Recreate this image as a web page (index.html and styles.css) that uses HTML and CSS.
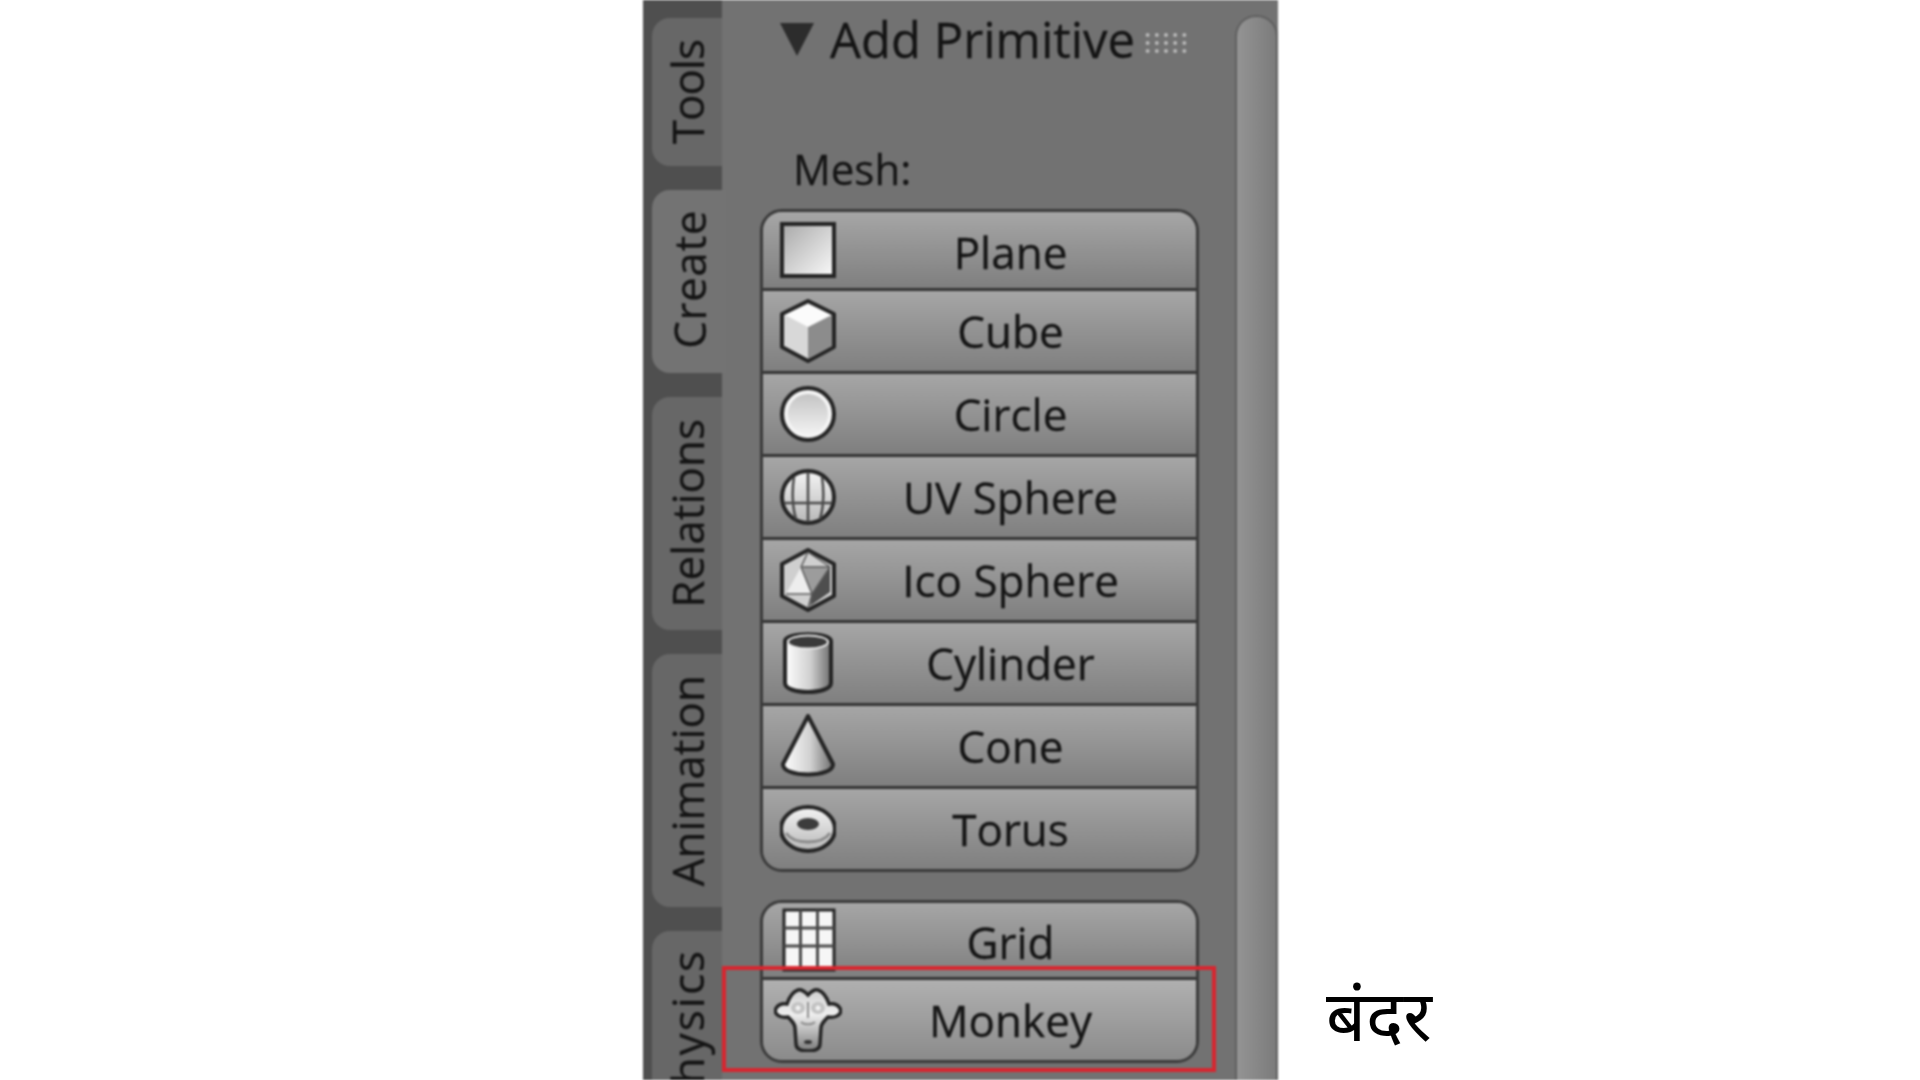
FILE: index.html
```html
<!DOCTYPE html>
<html lang="en">
<head>
  <meta charset="UTF-8">
  <meta name="viewport" content="width=device-width, initial-scale=1.0">
  <title>Add Primitive</title>
  <link rel="stylesheet" href="styles.css">
</head>
<body>
  <svg class="defs" width="0" height="0">
    <defs>
      <linearGradient id="shadeDiag" x1="0" y1="0" x2="1" y2="1">
        <stop offset="0" stop-color="#a8a8a8"/>
        <stop offset="1" stop-color="#fafafa"/>
      </linearGradient>
      <linearGradient id="shadeDown" x1="0" y1="0" x2="0" y2="1">
        <stop offset="0" stop-color="#f4f4f4"/>
        <stop offset="1" stop-color="#b8b8b8"/>
      </linearGradient>
      <linearGradient id="shadeMonkey" x1="0" y1="0" x2="0" y2="1">
        <stop offset="0" stop-color="#cfcfcf"/>
        <stop offset="0.4" stop-color="#efefef"/>
        <stop offset="1" stop-color="#7c7c7c"/>
      </linearGradient>
      <linearGradient id="shadeSide" x1="0" y1="0" x2="1" y2="0">
        <stop offset="0" stop-color="#ffffff"/>
        <stop offset="0.55" stop-color="#d0d0d0"/>
        <stop offset="1" stop-color="#6e6e6e"/>
      </linearGradient>
      <linearGradient id="shadeCircle" x1="0" y1="0" x2="0" y2="1">
        <stop offset="0" stop-color="#c4c4c4"/>
        <stop offset="1" stop-color="#f2f2f2"/>
      </linearGradient>
    </defs>
  </svg>

  <div class="panel">
    <nav class="tabs">
      <div class="tab first"><span>Tools</span></div>
      <div class="tab active"><span>Create</span></div>
      <div class="tab"><span>Relations</span></div>
      <div class="tab tight"><span>Animation</span></div>
      <div class="tab last"><span>Physics</span></div>
    </nav>

    <main class="content">
      <div class="header">
        <span class="arrow"></span>
        <h2>Add Primitive</h2>
        <span class="grip"></span>
      </div>
      <div class="label">Mesh:</div>

      <div class="group">
        <div class="row">
          <svg class="icon" viewBox="0 0 56 64"><rect x="2" y="6" width="52" height="52" fill="url(#shadeDiag)" stroke="#242424" stroke-width="4"/></svg>
          <span>Plane</span>
        </div>
        <div class="row">
          <svg class="icon" viewBox="0 0 56 64">
            <path d="M28 2 L54 15 V48 L28 62 L2 48 V15Z" fill="#d8d8d8" stroke="#242424" stroke-width="4" stroke-linejoin="round"/>
            <path d="M28 28 L52 16 V47 L28 60Z" fill="#8c8c8c"/>
            <path d="M28 5 L51 16 L28 28 L5 16Z" fill="#fbfbfb"/>
          </svg>
          <span>Cube</span>
        </div>
        <div class="row">
          <svg class="icon" viewBox="0 0 56 64">
            <circle cx="28" cy="32" r="26" fill="#f4f4f4" stroke="#242424" stroke-width="4"/>
            <circle cx="28" cy="32" r="20" fill="url(#shadeCircle)"/>
          </svg>
          <span>Circle</span>
        </div>
        <div class="row">
          <svg class="icon" viewBox="0 0 56 64">
            <circle cx="28" cy="32" r="26" fill="url(#shadeDown)" stroke="#242424" stroke-width="4"/>
            <path d="M28 7 V57 M4 38 H52 M14 12 C12 24 12 42 16 54 M42 12 C44 24 44 42 40 54" fill="none" stroke="#4a4a4a" stroke-width="2.5"/>
          </svg>
          <span>UV Sphere</span>
        </div>
        <div class="row">
          <svg class="icon" viewBox="0 0 56 64">
            <path d="M28 2 L54 16 V48 L28 62 L2 48 V16Z" fill="#cfcfcf" stroke="#242424" stroke-width="4" stroke-linejoin="round"/>
            <path d="M6 46 L21 19 L32 46Z" fill="#ededed"/>
            <path d="M21 19 H50 L32 46Z" fill="#9c9c9c"/>
            <path d="M32 46 L50 19 V44 L30 58Z" fill="#4e4e4e"/>
            <path d="M28 4 L21 19 M28 4 L50 19 M21 19 H50 M21 19 L32 46 L50 19 M6 46 H32 L28 60" fill="none" stroke="#5a5a5a" stroke-width="1.5"/>
          </svg>
          <span>Ico Sphere</span>
        </div>
        <div class="row">
          <svg class="icon" viewBox="0 0 56 64">
            <path d="M5 10 C5 1 51 1 51 10 V52 C51 64 5 64 5 52Z" fill="url(#shadeSide)" stroke="#242424" stroke-width="4"/>
            <ellipse cx="28" cy="11" rx="20" ry="6.5" fill="#3a3a3a" stroke="#e8e8e8" stroke-width="2"/>
          </svg>
          <span>Cylinder</span>
        </div>
        <div class="row">
          <svg class="icon" viewBox="0 0 56 64">
            <path d="M28 2 L53 50 C54 64 2 64 3 50Z" fill="url(#shadeSide)" stroke="#242424" stroke-width="4" stroke-linejoin="round"/>
          </svg>
          <span>Cone</span>
        </div>
        <div class="row">
          <svg class="icon" viewBox="0 0 56 64">
            <ellipse cx="28" cy="32" rx="27" ry="22" fill="url(#shadeDown)" stroke="#242424" stroke-width="4"/>
            <ellipse cx="28" cy="27" rx="11" ry="6" fill="#3c3c3c"/>
            <path d="M6 36 C14 48 42 48 50 36" fill="none" stroke="#8a8a8a" stroke-width="3"/>
          </svg>
          <span>Torus</span>
        </div>
      </div>

      <div class="group second">
        <div class="row">
          <svg class="icon" viewBox="0 0 56 64">
            <rect x="4" y="2" width="50" height="60" fill="#f6f6f6" stroke="#242424" stroke-width="3"/>
            <path d="M20.5 2 V62 M37.5 2 V62 M4 20 H54 M4 38 H54" fill="none" stroke="#4a4a4a" stroke-width="3"/>
          </svg>
          <span>Grid</span>
        </div>
        <div class="row monkey">
          <svg class="icon wide" viewBox="0 0 68 64">
            <path d="M24 2 C28 1 31 4 34 7 C37 4 40 1 44 2 C50 4 53 10 55 16 C60 15 66 17 67 23 C66 28 60 30 54 29 C50 33 47 36 47 40 L46 56 C46 61 41 63 34 63 C27 63 22 61 22 56 L21 40 C21 36 18 33 14 29 C8 30 2 28 1 23 C2 17 8 15 13 16 C15 10 18 4 24 2Z" fill="url(#shadeMonkey)" stroke="#242424" stroke-width="3.5"/>
            <ellipse cx="24" cy="20" rx="7" ry="6" fill="#c2c2c2"/>
            <ellipse cx="44" cy="20" rx="7" ry="6" fill="#c2c2c2"/>
            <circle cx="24" cy="20" r="2.5" fill="#f2f2f2"/>
            <circle cx="44" cy="20" r="2.5" fill="#f2f2f2"/>
            <path d="M34 14 V30 M27 34 C30 37 38 37 41 34" fill="none" stroke="#8f8f8f" stroke-width="2"/>
            <ellipse cx="34" cy="54" rx="4" ry="2" fill="#333"/>
          </svg>
          <span>Monkey</span>
          <div class="highlight"></div>
        </div>
      </div>
    </main>

    <div class="scrollbar"></div>
  </div>

  <p class="note">बंदर</p>
</body>
</html>
```

FILE: styles.css
```css
html, body { margin: 0; height: 1080px; overflow: hidden; background: #fff; }
body { display: flex; padding-left: 643px; box-sizing: border-box; font-family: "Open Sans", "Noto Sans", sans-serif; }
.defs { position: absolute; }

.panel { width: 635px; height: 1080px; flex: none; display: flex; overflow: hidden; background: #727272; filter: blur(1px); color: #141414; -webkit-text-stroke: 0.3px #141414; }

/* left tab strip */
.tabs { width: 79px; flex: none; box-sizing: border-box; padding: 18px 0 0 9px; display: flex; flex-direction: column; gap: 24px; background: #4f4f4f; }
.tab { flex: none; background: #676767; border-radius: 18px 0 0 18px; padding: 22px 0; display: flex; justify-content: center; font-size: 44px; line-height: 67px; }
.tab span { writing-mode: vertical-rl; transform: rotate(180deg); }
.tab.first { letter-spacing: -1px; }
.tab.active { background: #737373; margin-right: -4px; letter-spacing: 0.6px; padding: 20px 0 24px; }
.tab.tight { padding: 21px 0; }
.tab.last { padding-top: 18px; letter-spacing: 2px; }

.content { width: 513px; flex: none; box-sizing: border-box; padding-left: 38px; }

.header { height: 78px; display: flex; align-items: center; margin-left: 20px; }
.arrow { width: 0; height: 0; border-left: 17px solid transparent; border-right: 17px solid transparent; border-top: 33px solid #2c2c2c; }
.header h2 { margin: 0 0 0 16px; font-size: 49px; font-weight: normal; line-height: 78px; }
.grip { width: 46px; height: 24px; margin: 8px 0 0 8px; background-image: radial-gradient(circle, #bdbdbd 1.5px, transparent 2.2px); background-size: 9.2px 8px; }

.label { height: 131px; box-sizing: border-box; padding: 62px 0 0 33px; font-size: 42px; line-height: 58px; }

.group { width: 439px; box-sizing: border-box; border: 3px solid #3a3a3a; border-radius: 22px; }
.second { margin-top: 28px; }

.row { height: 83px; box-sizing: border-box; display: flex; align-items: center; padding: 0 11px 0 17px; border-top: 3px solid #333; background: linear-gradient(#a6a6a6, #7f7f7f); font-size: 44px; position: relative; }
.row:first-child { height: 76px; border-top: none; border-radius: 19px 19px 0 0; }
.row:first-child span { padding-top: 4px; }
.second .row:first-child { height: 74px; }
.row:last-child { border-radius: 0 0 19px 19px; }
.row span { flex: 1; text-align: center; line-height: 60px; }
.row.monkey { background: linear-gradient(#b0b0b0, #8b8b8b); }

.icon { width: 56px; height: 64px; flex: none; }
.icon.wide { width: 68px; margin: 0 -6px; }

/* red box round the monkey button */
.highlight { position: absolute; left: -41px; right: -20px; top: -14px; bottom: -12px; border: 4px solid #d8262f; }

.scrollbar { width: 43px; flex: none; margin-top: 15px; border-radius: 21px 21px 0 0; border: 2px solid #5f5f5f; border-bottom: none; box-sizing: border-box; background: linear-gradient(90deg, #949494, #7b7b7b); }

.note { align-self: flex-end; margin: 0 0 26px 48px; font-size: 70px; line-height: 80px; color: #000; }
```
